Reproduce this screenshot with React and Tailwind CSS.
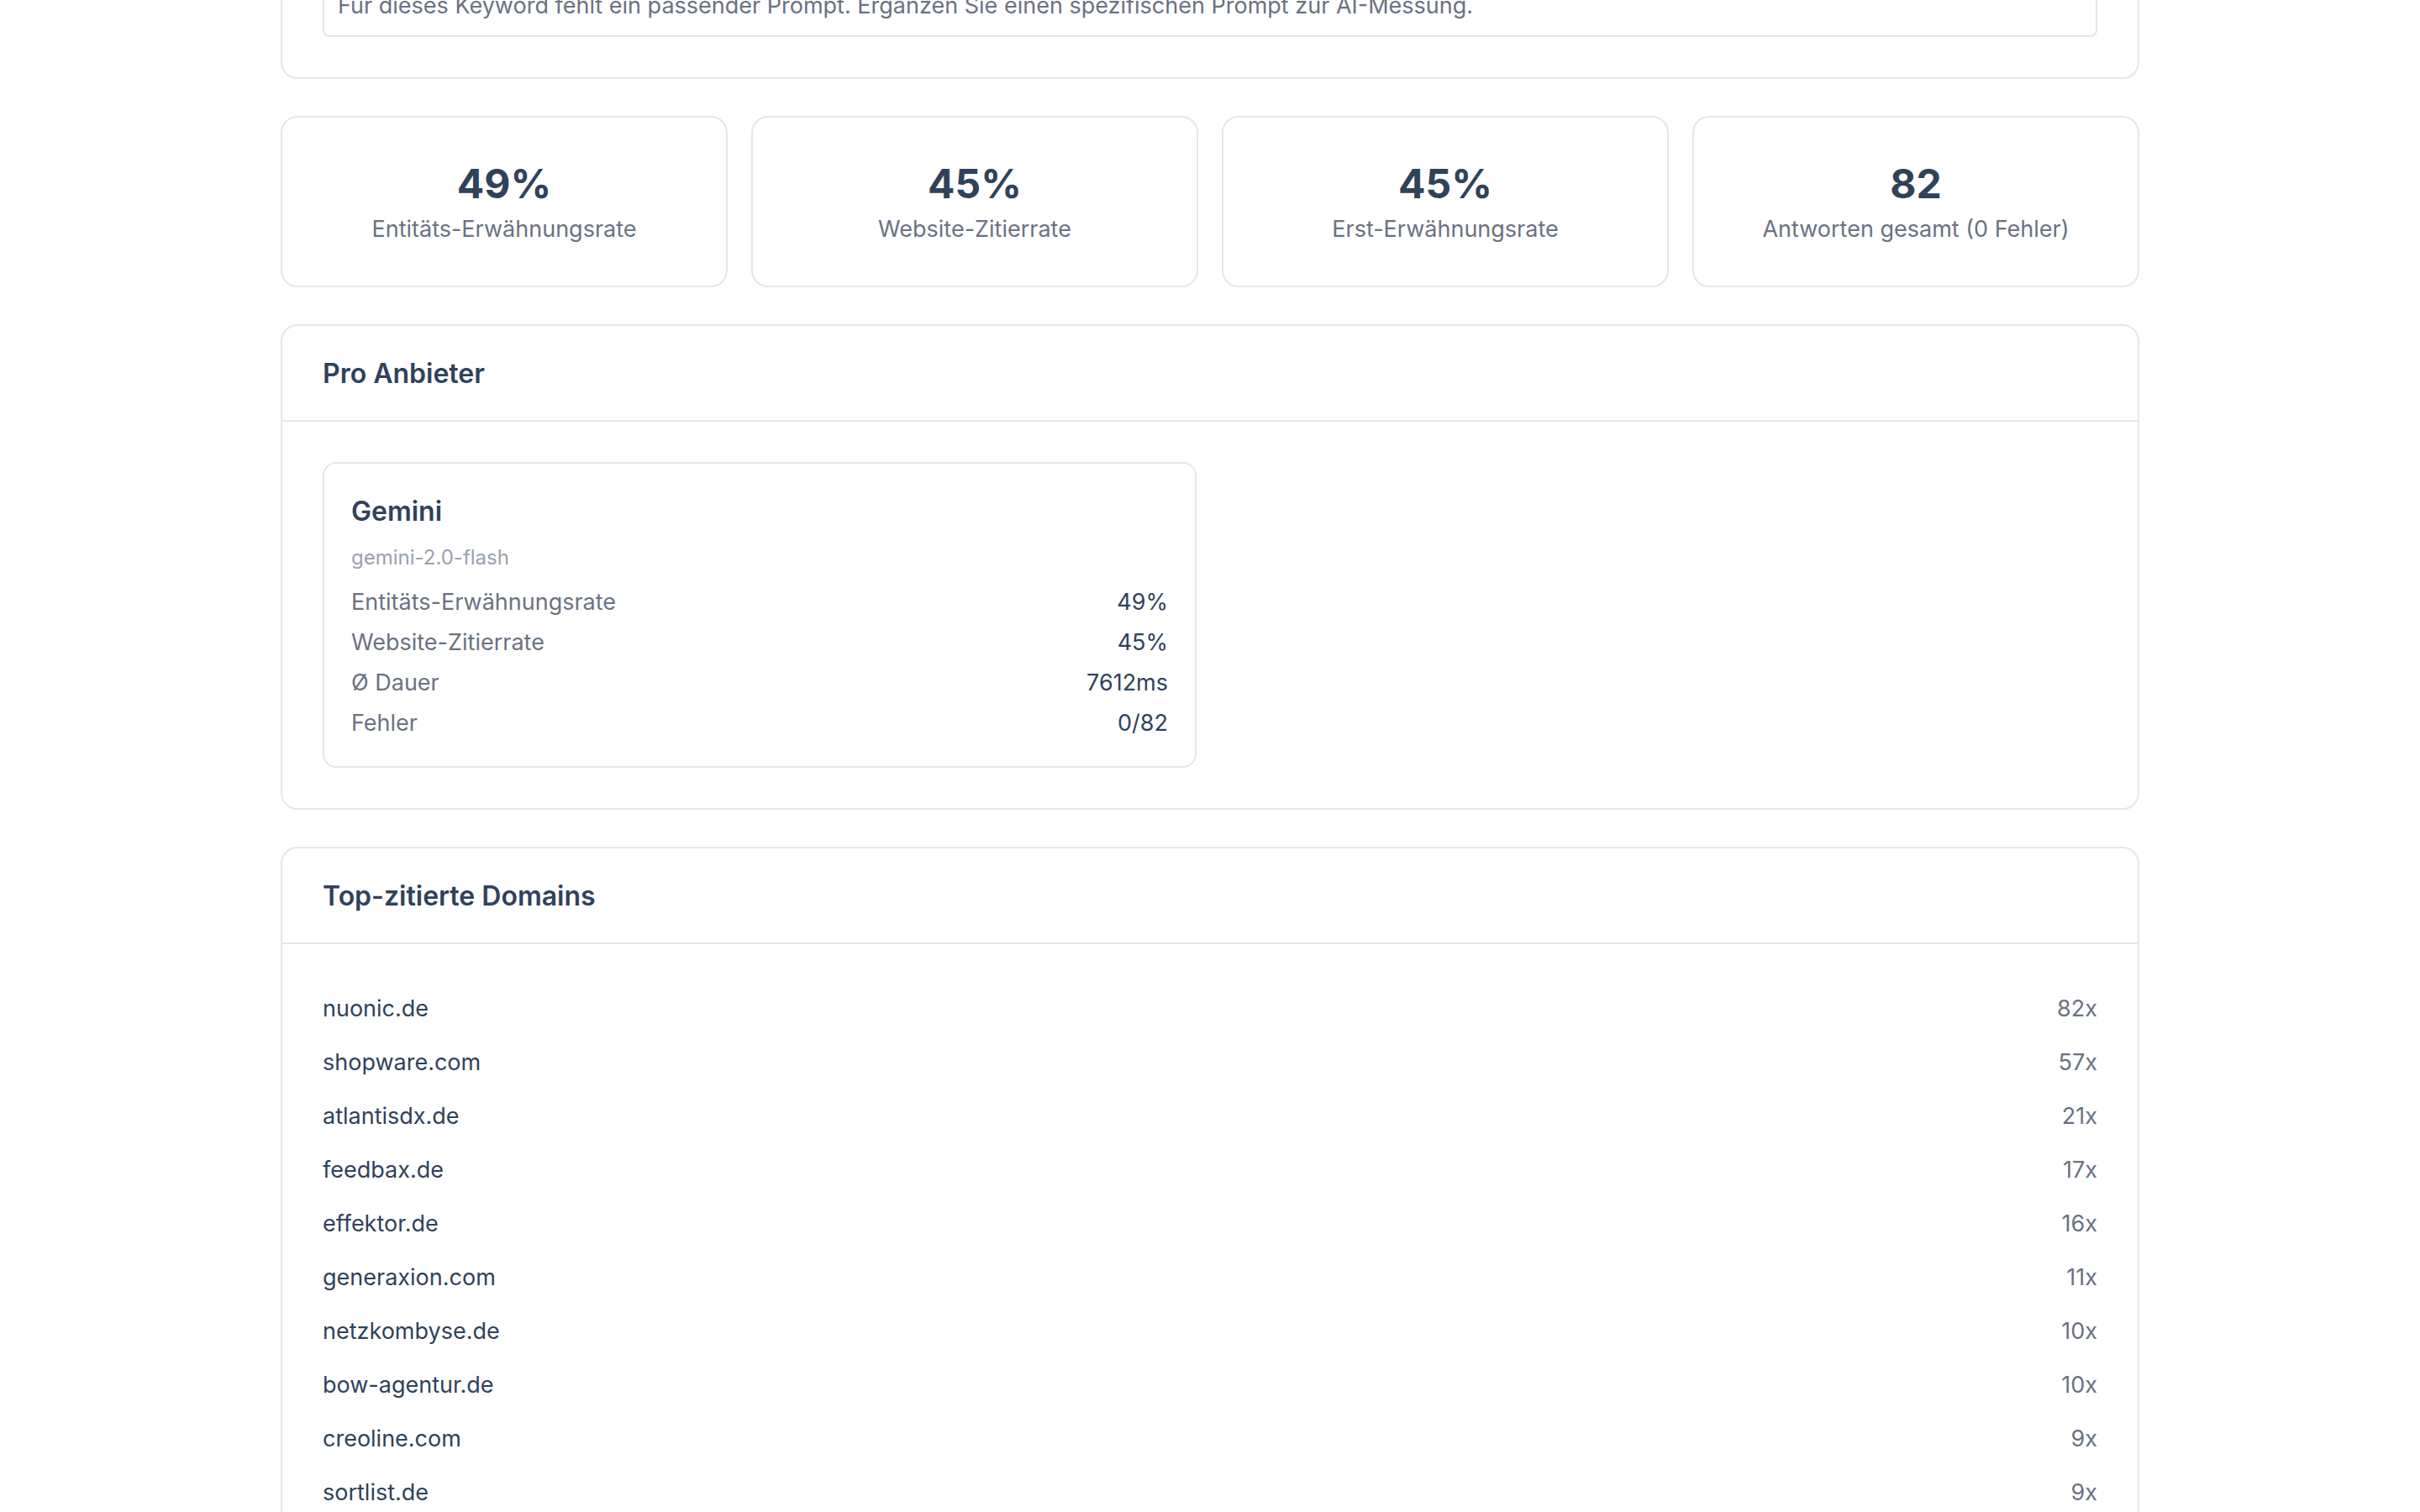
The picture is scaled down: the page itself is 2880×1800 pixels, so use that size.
const stats = [
  { value: '49%', label: 'Entitäts-Erwähnungsrate' },
  { value: '45%', label: 'Website-Zitierrate' },
  { value: '45%', label: 'Erst-Erwähnungsrate' },
  { value: '82', label: 'Antworten gesamt (0 Fehler)' },
];

const providers = [
  {
    name: 'Gemini',
    model: 'gemini-2.0-flash',
    metrics: [
      ['Entitäts-Erwähnungsrate', '49%'],
      ['Website-Zitierrate', '45%'],
      ['Ø Dauer', '7612ms'],
      ['Fehler', '0/82'],
    ],
  },
];

const domains = [
  ['nuonic.de', 82],
  ['shopware.com', 57],
  ['atlantisdx.de', 21],
  ['feedbax.de', 17],
  ['effektor.de', 16],
  ['generaxion.com', 11],
  ['netzkombyse.de', 10],
  ['bow-agentur.de', 10],
  ['creoline.com', 9],
  ['sortlist.de', 9],
];

function Card({ title, children }) {
  return (
    <section className="rounded-[20px] border-2 border-[#e1e7f0] bg-white">
      {title && (
        <h2 className="border-b-2 border-[#e1e7f0] px-12 pt-[33px] pb-[31px] text-[32px] leading-[48px] font-semibold">
          {title}
        </h2>
      )}
      <div className="p-12">{children}</div>
    </section>
  );
}

function Stat({ value, label }) {
  return (
    <div className="rounded-[20px] border-2 border-[#e1e7f0] bg-white px-12 pt-12 pb-[46px] text-center">
      <div className="text-[48px] leading-[62px] font-bold">{value}</div>
      <div className="mt-0.5 text-[27px] leading-[42px] text-gray-500">{label}</div>
    </div>
  );
}

function Provider({ name, model, metrics }) {
  return (
    <article className="rounded-2xl border-2 border-[#e1e7f0] px-8 pt-8 pb-[30px]">
      <h3 className="text-[32px] leading-[50px] font-semibold">{name}</h3>
      <p className="mt-3.5 mb-4 text-2xl leading-8 text-gray-400">{model}</p>
      <dl className="flex flex-col gap-1.5 text-[27px] leading-[42px]">
        {metrics.map(([label, value]) => (
          <div key={label} className="flex justify-between">
            <dt className="text-gray-500">{label}</dt>
            <dd>{value}</dd>
          </div>
        ))}
      </dl>
    </article>
  );
}

export default function App() {
  return (
    <div className="h-screen overflow-hidden bg-white font-['Inter',sans-serif] text-[#2f425a]">
      <main className="mx-auto -mt-[84px] flex w-full max-w-[2212px] flex-col gap-11">
        <Card>
          <p className="rounded-lg border-2 border-[#e1e7f0] px-4 pt-[18px] pb-3.5 text-[27px] leading-[42px] text-gray-500">
            Für dieses Keyword fehlt ein passender Prompt. Ergänzen Sie einen spezifischen Prompt zur AI-Messung.
          </p>
        </Card>

        <div className="grid grid-cols-4 gap-7">
          {stats.map((s) => (
            <Stat key={s.label} {...s} />
          ))}
        </div>

        <Card title="Pro Anbieter">
          <div className="grid grid-cols-2 gap-8">
            {providers.map((p) => (
              <Provider key={p.name} {...p} />
            ))}
          </div>
        </Card>

        <Card title="Top-zitierte Domains">
          <ul className="flex flex-col text-[27px] leading-[42px]">
            {domains.map(([domain, count]) => (
              <li key={domain} className="flex justify-between pt-2 pb-3.5">
                <span>{domain}</span>
                <span className="text-gray-500">{count}x</span>
              </li>
            ))}
          </ul>
        </Card>
      </main>
    </div>
  );
}
